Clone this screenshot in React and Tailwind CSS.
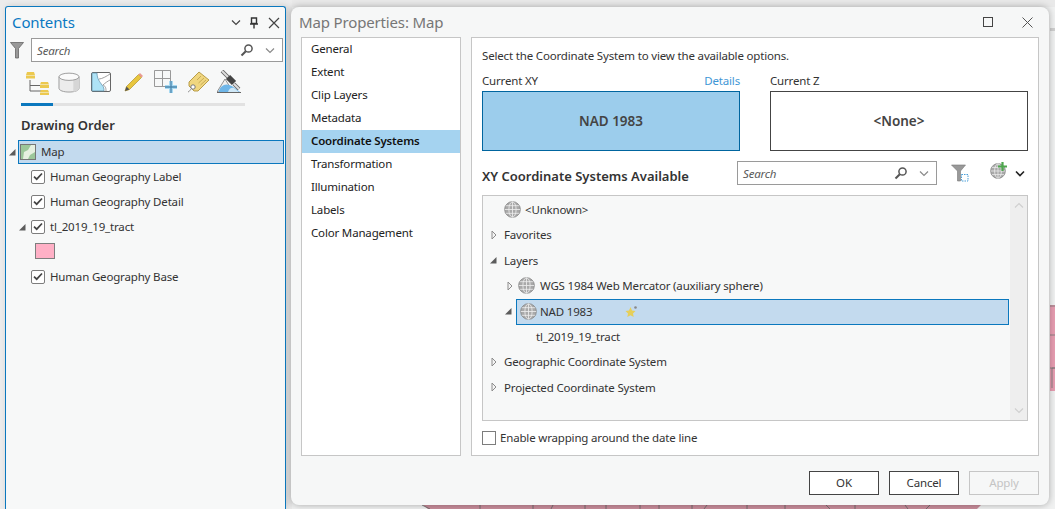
const FONT = "font-['Noto_Sans','Open_Sans',sans-serif]";
const T12 = "text-[11.5px] tracking-[-0.17px]";

function Chevron({ className = "", color = "#555", w = 1.2 }) {
  return (
    <svg width="10" height="7" viewBox="0 0 10 7" className={className}>
      <path d="M1 1.5 L5 5.5 L9 1.5" fill="none" stroke={color} strokeWidth={w} />
    </svg>
  );
}
function Magnifier() {
  return (
    <svg width="14" height="14" viewBox="0 0 14 14">
      <circle cx="8.5" cy="5.5" r="3.6" fill="none" stroke="#555" strokeWidth="1.5" />
      <path d="M5.8 8.2 L1.5 12.5" stroke="#555" strokeWidth="2" />
    </svg>
  );
}
function SearchBox({ className = "" }) {
  return (
    <div className={`flex items-center bg-white border border-[#9a9a9a] h-6 pl-[5px] ${className}`}>
      <span className={`italic ${T12} text-[#5a5a5a] flex-1 pt-[1px]`}>Search</span>
      <Magnifier />
      <Chevron className="ml-[11px] mr-[7px]" color="#8a8a8a" />
    </div>
  );
}
function Globe({ size = 17 }) {
  return (
    <svg width={size} height={size} viewBox="0 0 16 16" className="shrink-0">
      <circle cx="8" cy="8" r="7.4" fill="#a9a9a9" stroke="#8a8a8a" strokeWidth="0.8" />
      <g fill="none" stroke="#ececec" strokeWidth="0.8">
        <ellipse cx="8" cy="8" rx="3.4" ry="7.2" />
        <path d="M8 .8 V15.2 M.8 8 H15.2 M2 4.4 H14 M2 11.6 H14" />
      </g>
    </svg>
  );
}
function Expand({ open, className = "" }) {
  return open ? (
    <svg width="8" height="8" viewBox="0 0 8 8" className={`shrink-0 ${className}`}>
      <path d="M7.5 1 V7.5 H1 Z" fill="#5c5c5c" />
    </svg>
  ) : (
    <svg width="6" height="10" viewBox="0 0 6 10" className={`shrink-0 ${className}`}>
      <path d="M1 1 L5 5 L1 9 Z" fill="#f4f4f4" stroke="#8c8c8c" />
    </svg>
  );
}
function Check() {
  return (
    <span className="shrink-0 flex items-center justify-center w-[14px] h-[14px] rounded-[2px] border border-[#7d7d7d] bg-white">
      <svg width="10" height="9" viewBox="0 0 10 9">
        <path d="M1 4.6 L3.7 7.2 L9 1.5" fill="none" stroke="#444" strokeWidth="1.7" />
      </svg>
    </span>
  );
}
function TabIcons() {
  return (
    <div className="flex items-start h-[32px]">
      <svg width="24" height="24" viewBox="0 0 24 24" className="ml-[20px] mt-[0px]">
        <path d="M4 9 V20 H15 M4 14.5 H15" fill="none" stroke="#666" strokeWidth="1" />
        <path d="M1 1 H8 L9 4 H0 Z M0 4.5 H9 V7.5 H0 Z" fill="#ecc94f" />
        <path d="M15 11 H22 L23 13.5 H14 Z M14 14 H23 V17 H14 Z" fill="#ecc94f" />
        <path d="M15 19 H22 L23 21 H14 Z M14 21.5 H23 V24 H14 Z" fill="#ecc94f" />
      </svg>
      <svg width="22" height="21" viewBox="0 0 23 22" className="ml-[8px] mt-[1px]">
        <path d="M1 5 V17 C1 19.5 6 21 11.5 21 C17 21 22 19.5 22 17 V5 Z" fill="#ececec" stroke="#9a9a9a" />
        <path d="M16 7 H22 V17 C22 19 19 20.4 16 20.8 Z" fill="#d6d6d6" />
        <ellipse cx="11.5" cy="5" rx="10.5" ry="3.8" fill="#fafafa" stroke="#9a9a9a" />
      </svg>
      <svg width="20" height="20" viewBox="0 0 20 20" className="ml-[11px] mt-[1px]">
        <rect x="0.5" y="0.5" width="19" height="19" rx="1.5" fill="#fff" stroke="#666" />
        <path d="M1 1 H6 C6 7 9 10 11 13 C13 15 13 17 13 19 H1 Z" fill="#aee3f6" stroke="#5c8aa5" strokeWidth="0.7" />
        <path d="M8 7 C11 7 16 4 19 2 M12 13 C14 11 17 9 19 8 M15 19 C15 15 14 14 12 13" fill="none" stroke="#888" strokeWidth="0.8" />
      </svg>
      <svg width="21" height="21" viewBox="0 0 21 21" className="ml-[12px] mt-[1px]">
        <path d="M2 19 L3.5 14.5 L15.5 2.5 L18.5 5.5 L6.5 17.5 Z" fill="#e8c63e" stroke="#b1952c" strokeWidth="0.7" />
        <path d="M15.5 2.5 L17 1 L20 4 L18.5 5.5 Z" fill="#e99a92" />
        <path d="M2 19 L3.5 14.5 L6.5 17.5 Z" fill="#555" />
      </svg>
      <svg width="24" height="24" viewBox="0 0 24 24" className="ml-[10px] -mt-[1px]">
        <path d="M.5 .5 H16.5 V16.5 H.5 Z M.5 8.5 H16.5 M8.5 .5 V16.5" fill="none" stroke="#999" />
        <path d="M17 11 V23 M11 17 H23" stroke="#a9daf2" strokeWidth="4" />
        <path d="M17 11 V23 M11 17 H23" stroke="#4a86ad" strokeWidth="1.3" />
      </svg>
      <svg width="23" height="23" viewBox="0 0 23 23" className="ml-[9px] mt-[0px]">
        <path d="M2 15 L2 11 L12 1 L22 9 L11 20 L7 20 Z" fill="#f0d67f" stroke="#b1943c" strokeWidth="0.9" />
        <path d="M10 9 L14 5 M11.5 12 L17 7 M13.5 14 L19 9" stroke="#bda14b" strokeWidth="0.8" />
        <circle cx="6" cy="16" r="2.2" fill="#fff" stroke="#777" />
        <path d="M5 17 C3 19 2 21 1 21" fill="none" stroke="#888" />
      </svg>
      <svg width="24" height="24" viewBox="0 0 24 24" className="ml-[7px] -mt-[1px]">
        <path d="M0 22 L8 9 L16 22 Z" fill="#f0f0f0" stroke="#777" strokeWidth="0.8" />
        <path d="M1.5 22 C3 16 8 13 12 15 C16 16 19 19 23 22 Z" fill="#6fb6e8" />
        <path d="M11 22 C12 18 15 17 17 18 L22 22 Z" fill="#cfe8f7" />
        <path d="M0 22.5 H24" stroke="#666" />
        <path d="M5 1 L11 7 M17 14 L22 19" stroke="#666" strokeWidth="3.8" />
        <path d="M5 1 L11 7 M17 14 L22 19" stroke="#ddd" strokeWidth="2" />
        <path d="M11 7 L17 13" stroke="#444" strokeWidth="6" />
      </svg>
    </div>
  );
}

function LayerRow({ label, expand }) {
  return (
    <div className="flex items-center h-[25px]">
      <div className="w-[25px] flex justify-end pr-[5px]">{expand && <Expand open />}</div>
      <Check />
      <span className={`ml-[5px] ${T12}`}>{label}</span>
    </div>
  );
}

function ContentsPanel() {
  return (
    <aside className="relative w-[281px] h-[503px] mt-[6px] shrink-0 border border-b-0 border-[#0b78be] rounded-t-[3px] bg-[#f7f8f8] shadow-[2px_0_6px_rgba(0,0,0,0.15)] flex flex-col">
      <div className="flex items-center h-[31px] pl-[6px] pr-[5px]">
        <span className="text-[15px] tracking-[-0.1px] text-[#0a78c2] flex-1 pb-[1px]">Contents</span>
        <Chevron color="#444" className="mr-[8px]" />
        <svg width="10" height="12" viewBox="0 0 10 12" className="mr-[9px]">
          <path d="M2.5 1 H7.5 V6.5 H2.5 Z M1 7 H9 M5 7 V11.5" fill="none" stroke="#333" strokeWidth="1.4" />
        </svg>
        <svg width="12" height="12" viewBox="0 0 12 12">
          <path d="M1 1 L11 11 M11 1 L1 11" stroke="#444" strokeWidth="1.2" />
        </svg>
      </div>
      <div className="flex items-center h-[24px] pl-[4px] pr-[2px]">
        <svg width="14" height="17" viewBox="0 0 14 17" className="mr-[7px]">
          <path d="M0.5 0.5 H13.5 L8.5 6.5 V16 H5.5 V6.5 Z" fill="#999" stroke="#666" strokeWidth="0.8" />
        </svg>
        <SearchBox className="flex-1" />
      </div>
      <div className="mt-[9px]"><TabIcons /></div>
      <div className="ml-[15px] w-[224px] h-[3px] bg-[#e2e2e2]">
        <div className="w-[32px] h-[3px] bg-[#0b78be]" />
      </div>
      <div className="mt-[10px] pl-[15px] text-[13px] font-semibold h-[25px] leading-[18px] text-[#333]">Drawing Order</div>
      <div className="mt-[-1px] flex items-center h-[24px]">
        <div className="w-[10px] mr-[2px] flex justify-end"><Expand open /></div>
        <div className="w-[266px] h-[24px] border border-[#0b78be] bg-[#c3daee] flex items-center pl-[1px] text-[#333]">
          <svg width="16" height="16" viewBox="0 0 16 16">
            <rect x="0.5" y="0.5" width="15" height="15" fill="#e6f0e0" stroke="#777" />
            <path d="M1 1 H11 L8 6 L4 8 L3 15 H1 Z M15 8 V15 H8 L10 11 Z" fill="#9cc79a" />
          </svg>
          <span className={`ml-[5px] ${T12}`}>Map</span>
        </div>
      </div>
      <div className="text-[#333]">
        <LayerRow label="Human Geography Label" />
        <LayerRow label="Human Geography Detail" />
        <LayerRow label="tl_2019_19_tract" expand />
        <div className="h-[25px] pl-[29px] pb-[2px] flex items-center">
          <span className="w-[20px] h-[16px] bg-[#ffb0c6] border border-[#7e7e7e]" />
        </div>
        <LayerRow label="Human Geography Base" />
      </div>
    </aside>
  );
}

function Sidebar() {
  const items = ["General", "Extent", "Clip Layers", "Metadata", "Coordinate Systems", "Transformation", "Illumination", "Labels", "Color Management"];
  return (
    <nav className={`w-[160px] h-[419px] shrink-0 bg-white border border-[#c6c6c6] ${T12} text-[#222]`}>
      {items.map((t) => (
        <div key={t} className={`h-[23px] pl-[9px] flex items-center pb-[1px] ${t === "Coordinate Systems" ? "bg-[#a5d3f0] font-semibold text-[#111]" : ""}`}>
          {t}
        </div>
      ))}
    </nav>
  );
}

function TreeRow({ pad, children }) {
  return (
    <div className="flex items-center h-[25.4px]" style={{ paddingLeft: pad }}>
      {children}
    </div>
  );
}

function Tree() {
  return (
    <div className={`h-[226px] bg-[#f7f8f8] border border-[#c6c6c6] flex ${T12} text-[#333]`}>
      <div className="flex-1 pt-[1px]">
        <TreeRow pad={21}><Globe /><span className="ml-[4px]">&lt;Unknown&gt;</span></TreeRow>
        <TreeRow pad={8}><Expand /><span className="ml-[7px]">Favorites</span></TreeRow>
        <TreeRow pad={6}><Expand open /><span className="ml-[7px]">Layers</span></TreeRow>
        <TreeRow pad={24}><Expand /><span className="ml-[5px]"><Globe /></span><span className="ml-[5px]">WGS 1984 Web Mercator (auxiliary sphere)</span></TreeRow>
        <div className="flex items-center h-[25.4px]">
          <div className="w-[33px] flex justify-end pr-[4px]"><Expand open /></div>
          <div className="flex-1 h-[26px] mt-[1px] border border-[#0b78be] bg-[#c3daee] flex items-center pl-[3px] mr-[1px]">
            <Globe />
            <span className="ml-[3px]">NAD 1983</span>
            <svg width="13" height="13" viewBox="0 0 13 13" className="ml-[33px]">
              <path d="M5.5 2 L7 5.5 L10.5 6 L8 8.5 L8.7 12 L5.5 10.2 L2.3 12 L3 8.5 L.5 6 L4 5.5 Z" fill="#e6cf5a" />
              <circle cx="10.5" cy="2.5" r="1.3" fill="#888" />
            </svg>
          </div>
        </div>
        <TreeRow pad={53}><span>tl_2019_19_tract</span></TreeRow>
        <TreeRow pad={8}><Expand /><span className="ml-[7px]">Geographic Coordinate System</span></TreeRow>
        <TreeRow pad={8}><Expand /><span className="ml-[7px]">Projected Coordinate System</span></TreeRow>
      </div>
      <div className="w-[17px] bg-[#eeeeee] flex flex-col justify-between items-center py-[6px]">
        <Chevron className="rotate-180" color="#cfcfcf" />
        <Chevron color="#cfcfcf" />
      </div>
    </div>
  );
}

function MainPane() {
  return (
    <section className={`w-[568px] h-[419px] shrink-0 bg-white border border-[#c6c6c6] px-[10px] ${T12} text-[#333]`}>
      <div className="h-[36px] flex items-center">Select the Coordinate System to view the available options.</div>
      <div className="flex gap-[30px]">
        <div className="w-[258px]">
          <div className="h-[17px] flex justify-between items-center pb-[4px]">
            <span>Current XY</span>
            <span className="text-[#3f97d6]">Details</span>
          </div>
          <div className="h-[60px] bg-[#9ccdec] border border-[#00659f] flex items-center justify-center text-[13.5px] font-semibold text-[#444] tracking-normal">NAD 1983</div>
        </div>
        <div className="w-[258px]">
          <div className="h-[17px] flex items-center pb-[4px]">Current Z</div>
          <div className="h-[60px] bg-white border border-[#444] flex items-center justify-center text-[13.5px] font-semibold text-[#444] tracking-normal">&lt;None&gt;</div>
        </div>
      </div>
      <div className="flex items-center h-[24px] mt-[10px] pr-[1px]">
        <span className="flex-1 text-[13px] font-semibold pt-[8px] tracking-normal">XY Coordinate Systems Available</span>
        <SearchBox className="w-[200px] mr-[1px]" />
        <svg width="18" height="18" viewBox="0 0 18 18" className="ml-[13px]">
          <path d="M.5 1 H14.5 L9.5 7 V17 H6.5 V7 Z" fill="#999" stroke="#777" strokeWidth="0.6" />
          <rect x="10.5" y="10.5" width="6.5" height="6.5" fill="#fff" stroke="#4b9fd8" strokeDasharray="1.5 1" />
        </svg>
        <span className="relative ml-[21px] -mt-[4px]">
          <Globe size={16} />
          <svg width="9" height="9" viewBox="0 0 9 9" className="absolute -top-[1px] -right-[1px]">
            <path d="M4.5 0 V9 M0 4.5 H9" stroke="#4ea64e" strokeWidth="2.2" />
          </svg>
        </span>
        <Chevron color="#222" w={1.6} className="ml-[9px] mr-[2px]" />
      </div>
      <div className="mt-[10px]"><Tree /></div>
      <label className="flex items-center mt-[8px]">
        <span className="w-[14px] h-[14px] border border-[#7d7d7d] bg-white" />
        <span className="ml-[4px]">Enable wrapping around the date line</span>
      </label>
    </section>
  );
}

function Dialog() {
  return (
    <div className="relative w-[758px] h-[498px] mt-[7px] ml-[5px] shrink-0 rounded-[8px] bg-[#f6f7f7] shadow-[0_0_7px_rgba(0,0,0,0.3)] flex flex-col">
      <div className="flex items-center h-[30px] pl-[8px] pr-[15px]">
        <span className="text-[15px] tracking-[-0.15px] text-[#767676] flex-1">Map Properties: Map</span>
        <svg width="10" height="10" viewBox="0 0 10 10" className="mr-[29px]">
          <rect x="0.5" y="0.5" width="9" height="9" fill="none" stroke="#444" />
        </svg>
        <svg width="11" height="11" viewBox="0 0 11 11" className="mr-[1px]">
          <path d="M.5 .5 L10.5 10.5 M10.5 .5 L.5 10.5" stroke="#555" strokeWidth="1" />
        </svg>
      </div>
      <div className="flex gap-[10px] pl-[10px]">
        <Sidebar />
        <MainPane />
      </div>
      <div className={`flex justify-end gap-[10px] pr-[10px] mt-[15px] ${T12}`}>
        <button className="w-[70px] h-[24px] bg-white border border-[#444] text-[#333]">OK</button>
        <button className="w-[70px] h-[24px] bg-white border border-[#444] text-[#333]">Cancel</button>
        <button className="w-[70px] h-[24px] bg-[#f6f7f7] border border-[#c6c6c6] text-[#c4c4c4]">Apply</button>
      </div>
    </div>
  );
}

function MapBehind() {
  return (
    <svg width="1055" height="509" viewBox="0 0 1055 509" className="absolute inset-0">
      <rect width="1055" height="509" fill="#f0f1f1" />
      <rect width="1055" height="7" fill="#e9e9e9" />
      <rect width="292" height="509" fill="#ececec" />
      <rect x="1050" y="28" width="5" height="3" fill="#cfcfcf" />
      <path d="M423 505 H981 L977 509 H428 Z" fill="#c98d9b" />
      <path d="M422 505 L430 509 M480 505 V509 M533 505 V509 M553 505 L551 509 M585 505 V509 M606 505 V509 M640 505 V509 M659 505 V509 M692 505 V509 M707 505 L704 509 M747 505 V509 M785 505 V509 M826 505 L830 509 M855 505 V509 M905 505 L908 509 M930 505 L926 509" stroke="#666" strokeWidth="0.8" fill="none" />
      <rect x="1050" y="305" width="5" height="86" fill="#e79db1" />
      <path d="M1050 306 H1055 M1050 335 H1055 M1050 368 H1055 M1052 388 V368 H1055" stroke="#777" strokeWidth="0.8" fill="none" />
    </svg>
  );
}

export default function App() {
  return (
    <div className={`relative w-[1055px] h-[509px] overflow-hidden bg-[#e9e9e9] flex pl-[5px] ${FONT}`}>
      <MapBehind />
      <ContentsPanel />
      <Dialog />
    </div>
  );
}
